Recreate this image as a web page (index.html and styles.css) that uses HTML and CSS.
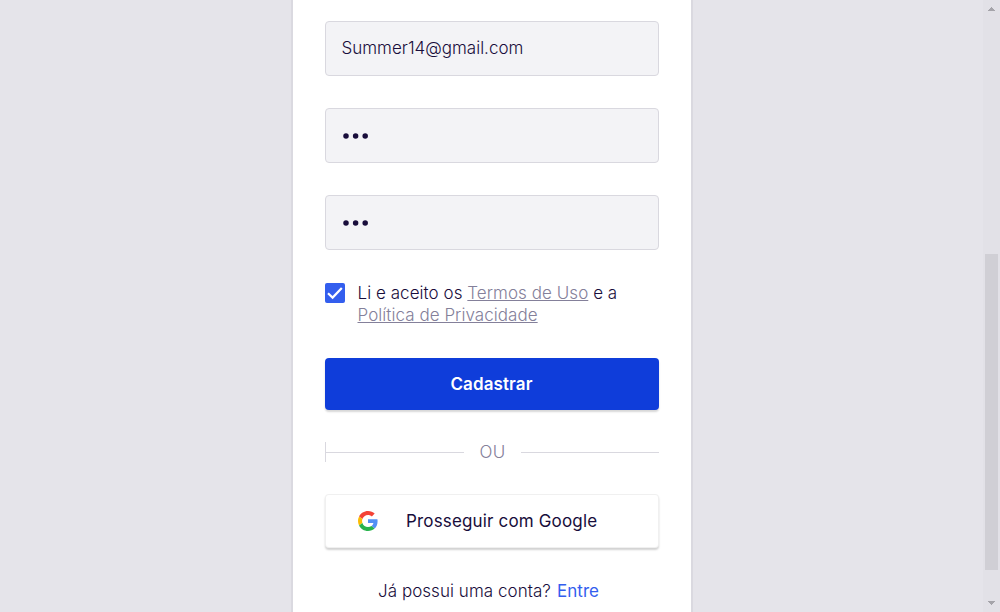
FILE: index.html
```html
<!DOCTYPE html>
<html lang="pt-BR">
<head>
<meta charset="utf-8">
<title>Cadastro</title>
<link rel="stylesheet" href="styles.css">
</head>
<body>
<div class="page">
  <main class="card">
    <div class="field"><span class="email">Summer14@gmail.com</span></div>
    <div class="field"><svg class="dots" viewBox="0 0 28 8"><circle cx="4" cy="4" r="2.75"/><circle cx="13.6" cy="4" r="2.75"/><circle cx="23.2" cy="4" r="2.75"/></svg></div>
    <div class="field"><svg class="dots" viewBox="0 0 28 8"><circle cx="4" cy="4" r="2.75"/><circle cx="13.6" cy="4" r="2.75"/><circle cx="23.2" cy="4" r="2.75"/></svg></div>
    <div class="terms">
      <svg class="check" viewBox="0 0 20 20"><rect width="20" height="20" rx="2" fill="#335eee"/><path d="M3 10.3l4.6 4.3L16.8 5" fill="none" stroke="#fff" stroke-width="2.2"/></svg>
      <p class="terms-text"><span class="line-one">Li e aceito os <a class="link">Termos de Uso</a> e a</span><br><a class="link">Política de Privacidade</a></p>
    </div>
    <button class="submit"><span class="submit-label">Cadastrar</span></button>
    <div class="divider"><span class="rule rule-start"></span><span class="or">OU</span><span class="rule"></span></div>
    <button class="google">
      <svg class="google-logo" viewBox="0 0 48 48"><path fill="#f44336" d="M24 9.5c3.54 0 6.71 1.22 9.21 3.6l6.85-6.85C35.9 2.38 30.47 0 24 0 14.62 0 6.51 5.38 2.56 13.22l7.98 6.19C12.43 13.72 17.74 9.5 24 9.5z"/><path fill="#5290f5" d="M46.98 24.55c0-1.57-.15-3.09-.38-4.55H24v9.02h12.94c-.58 2.96-2.26 5.48-4.78 7.18l7.73 6c4.51-4.18 7.09-10.36 7.09-17.65z"/><path fill="#fbbc05" d="M10.53 28.59A14.5 14.5 0 0 1 9.77 24c0-1.6.27-3.14.76-4.59l-7.98-6.19A24 24 0 0 0 0 24c0 3.87.93 7.52 2.56 10.78l7.97-6.19z"/><path fill="#27b34b" d="M24 48c6.48 0 11.93-2.13 15.89-5.81l-7.73-6c-2.15 1.45-4.92 2.3-8.16 2.3-6.26 0-11.57-4.22-13.47-9.91l-7.98 6.19C6.51 42.62 14.62 48 24 48z"/></svg>
      <span class="google-label">Prosseguir com Google</span>
    </button>
    <p class="login"><span class="question">Já possui uma conta?</span><a class="enter">Entre</a></p>
  </main>
</div>
<div class="scrollbar">
  <svg class="arrow" viewBox="0 0 7 4" shape-rendering="crispEdges"><path d="M3 0h1v1h1v1h1v1h1v1H0V3h1V2h1V1h1z" fill="#a5a4aa"/></svg>
  <div class="thumb"></div>
  <svg class="arrow" viewBox="0 0 7 4" shape-rendering="crispEdges"><path d="M0 0h7v1H6v1H5v1H4v1H3V3H2V2H1V1H0z" fill="#a5a4aa"/></svg>
</div>
</body>
</html>
```
FILE: styles.css
```css
* { box-sizing: border-box; }
body {
  margin: 0;
  height: 612px;
  display: flex;
  overflow: hidden;
  background: #e5e4ea;
  color: #180d3b;
  font: 300 17px/22px Inter, sans-serif;
}
p { margin: 0; }
button { font: inherit; color: inherit; border: 0; padding: 0; }
.page { width: 983px; padding-left: 291px; }
.card {
  width: 402px;
  height: 612px;
  padding: 21px 32px 0;
  background: #fff;
  border: solid #dad9e0;
  border-width: 0 2px;
}
.field {
  height: 55px;
  margin-bottom: 32px;
  padding: 0 15.5px;
  display: flex;
  align-items: center;
  background: #f3f3f6;
  border: 1px solid #d9d8df;
  border-radius: 4px;
}
.email { padding-bottom: 2px; }
.dots { width: 28px; height: 8px; margin: 1px 0 0 .8px; fill: #180d3b; }
.terms { display: flex; gap: 12.5px; height: 44px; }
.check { width: 20px; height: 20px; margin-top: 1px; flex: none; }
.terms-text { white-space: nowrap; letter-spacing: .05px; }
.link { color: #84809a; text-decoration: underline; }
.submit {
  display: block;
  width: 100%;
  height: 52px;
  margin-top: 32px;
  background: #0f3dda;
  color: #fff;
  font-weight: 600;
  letter-spacing: .12px;
  padding-right: 1px;
  border-radius: 4px;
  box-shadow: 0 2px 2px rgba(0, 0, 0, .16);
}
.divider { display: flex; align-items: center; gap: 16px; height: 20px; margin-top: 32px; }
.rule { flex: 1; height: 1px; background: #d9d8df; }
.rule-start { height: 20px; border-left: 1px solid #d9d8df; background: linear-gradient(#d9d8df, #d9d8df) 0 10px / 100% 1px no-repeat; }
.or { color: #84809a; letter-spacing: .2px; }
.google {
  width: 100%;
  height: 54px;
  margin-top: 32px;
  padding-left: 33px;
  display: flex;
  align-items: center;
  gap: 28px;
  background: #fff;
  border-radius: 4px;
  box-shadow: inset 0 0 0 1px rgba(0, 0, 0, .06), 0 2px 2px rgba(0, 0, 0, .18);
}
.google-logo { width: 20px; height: 20px; }
.google-label { font-weight: 400; letter-spacing: .16px; }
.login { display: flex; gap: 6px; justify-content: center; margin-top: 32px; padding-right: 7px; letter-spacing: .05px; }
.enter { color: #335eee; font-weight: 400; }
.scrollbar {
  width: 17px;
  height: 612px;
  padding: 7px 0 6px;
  display: flex;
  flex-direction: column;
  align-items: center;
  background: #e2e1e7;
}
.arrow { width: 7px; height: 4px; flex: none; }
.thumb { width: 13px; height: 316px; margin: 243px 0 31px; background: #d0cfd5; }
```
